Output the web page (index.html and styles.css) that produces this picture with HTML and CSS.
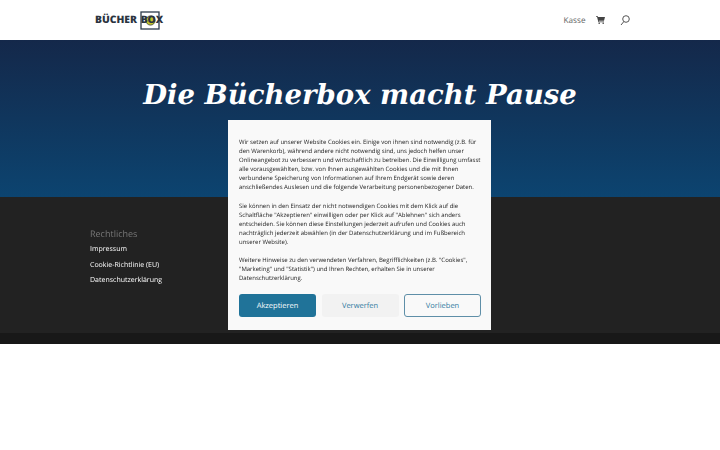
FILE: index.html
```html
<!DOCTYPE html>
<html lang="de">

<head>
    <meta charset="UTF-8">
    <title>Die Bücherbox macht Pause</title>
    <link rel="stylesheet" href="styles.css">
</head>

<body>
    <header class="site-header">
        <div class="logo">
            <span class="logo-text">BÜCHER</span>
            <span class="logo-box">
                <svg class="logo-mark" width="20" height="19" viewBox="0 0 20 19">
                    <rect x="1" y="1" width="18" height="17" fill="#fff" stroke="#2b3a4a" stroke-width="1.3" />
                    <circle cx="10.5" cy="9.5" r="4.6" fill="#c3c52a" stroke="#3a4030" stroke-width=".8" />
                </svg>
                <span class="logo-word">BOX</span>
            </span>
        </div>
        <nav class="site-nav">
            <a class="nav-link" href="#">Kasse</a>
            <svg class="cart" width="9" height="8" viewBox="0 0 9 8">
                <path d="M0 0h1.6l.3 1H9L8 4.8H2.8l.2.8H8v.7H2.4L1 .8H0z" fill="#444" />
                <circle cx="3.2" cy="7.2" r=".8" fill="#444" />
                <circle cx="7.2" cy="7.2" r=".8" fill="#444" />
            </svg>
            <svg class="search" width="10" height="11" viewBox="0 0 10 11">
                <circle cx="6" cy="4" r="3.3" fill="none" stroke="#555" stroke-width="1" />
                <path d="M3.8 6.6 1 10" fill="none" stroke="#555" stroke-width="1" />
            </svg>
        </nav>
    </header>

    <section class="hero">
        <h1>Die Bücherbox macht Pause</h1>
    </section>

    <footer class="site-footer">
        <div class="footer-col">
            <h4>Rechtliches</h4>
            <a href="#">Impressum</a>
            <a href="#">Cookie-Richtlinie (EU)</a>
            <a href="#">Datenschutzerklärung</a>
        </div>
    </footer>
    <div class="footer-bar"></div>

    <div class="cookie-box">
        <p>Wir setzen auf unserer Website Cookies ein. Einige von ihnen sind notwendig (z.B. für<br>den Warenkorb), während andere nicht notwendig sind, uns jedoch helfen unser<br>Onlineangebot zu verbessern und wirtschaftlich zu betreiben. Die Einwilligung umfasst<br>alle vorausgewählten, bzw. von Ihnen ausgewählten Cookies und die mit Ihnen<br>verbundene Speicherung von Informationen auf Ihrem Endgerät sowie deren<br>anschließendes Auslesen und die folgende Verarbeitung personenbezogener Daten.</p>
        <p>Sie können in den Einsatz der nicht notwendigen Cookies mit dem Klick auf die<br>Schaltfläche "Akzeptieren" einwilligen oder per Klick auf "Ablehnen" sich anders<br>entscheiden. Sie können diese Einstellungen jederzeit aufrufen und Cookies auch<br>nachträglich jederzeit abwählen (in der Datenschutzerklärung und im Fußbereich<br>unserer Website).</p>
        <p>Weitere Hinweise zu den verwendeten Verfahren, Begrifflichkeiten (z.B. "Cookies",<br>"Marketing" und "Statistik") und Ihren Rechten, erhalten Sie in unserer<br>Datenschutzerklärung.</p>
        <div class="cookie-buttons">
            <button class="btn btn-accept">Akzeptieren</button>
            <button class="btn btn-deny">Verwerfen</button>
            <button class="btn btn-prefs">Vorlieben</button>
        </div>
    </div>
</body>

</html>
```
FILE: styles.css
```css
* {
    box-sizing: border-box;
}

html,
body {
    margin: 0;
    padding: 0;
    background: #fff;
}

body {
    font-family: "Open Sans", sans-serif;
    height: 450px;
    overflow: hidden;
    text-rendering: geometricPrecision;
}

.site-header {
    height: 40px;
    background: #fff;
    display: flex;
    align-items: center;
    justify-content: space-between;
    padding: 0 90px 0 95px;
}

.logo {
    display: flex;
    align-items: center;
    gap: 3px;
    font-size: 10.3px;
    font-weight: 800;
    color: #2b3440;
}

.logo-box {
    position: relative;
    display: flex;
    align-items: center;
    justify-content: center;
    width: 24px;
    height: 19px;
}

.logo-mark {
    position: absolute;
    left: 0;
    top: 0;
}

.logo-word {
    position: relative;
}

.site-nav {
    display: flex;
    align-items: center;
}

.nav-link {
    font-size: 8.2px;
    color: #666;
    text-decoration: none;
    margin-right: 10.5px;
}

.search {
    margin-left: 15px;
}

.hero {
    height: 157px;
    background: linear-gradient(180deg, #14284a 0%, #0c4470 100%);
    padding-top: 36px;
}

.hero h1 {
    margin: 0;
    text-align: center;
    color: #fff;
    font-family: "DejaVu Serif", serif;
    font-style: italic;
    font-weight: 700;
    font-size: 27.5px;
    line-height: 38px;
}

.site-footer {
    height: 136px;
    background: #222;
    padding: 28.5px 0 0 90px;
}

.footer-col {
    will-change: transform;
}

.footer-col h4 {
    margin: 0;
    font-size: 9px;
    font-weight: 400;
    line-height: 16px;
    color: #777;
}

.footer-col a {
    display: block;
    font-size: 7px;
    line-height: 15.5px;
    color: #fff;
    text-decoration: none;
}

.footer-bar {
    height: 11px;
    background: #181818;
}

.cookie-box {
    position: fixed;
    left: 228px;
    top: 120px;
    width: 263px;
    height: 210px;
    background: #f9f9f9;
    padding: 18px 10px 0 11px;
    font-size: 6px;
    line-height: 9.1px;
    color: #222;
}

.cookie-box p {
    margin: 0 0 9px;
    white-space: nowrap;
    will-change: transform;
}

.cookie-buttons {
    display: flex;
    gap: 5.5px;
    margin-top: 11px;
}

.btn {
    flex: 1;
    height: 23px;
    border-radius: 3px;
    font-family: "Open Sans", sans-serif;
    font-size: 7.5px;
    text-rendering: inherit;
    padding: 0;
    border: 1px solid transparent;
}

.btn-accept {
    background: #207399;
    color: #fff;
}

.btn-deny {
    background: #f2f2f2;
    color: #2f7a9e;
}

.btn-prefs {
    background: #f9f9f9;
    border-color: #5f8fa8;
    color: #2f7a9e;
}
```
